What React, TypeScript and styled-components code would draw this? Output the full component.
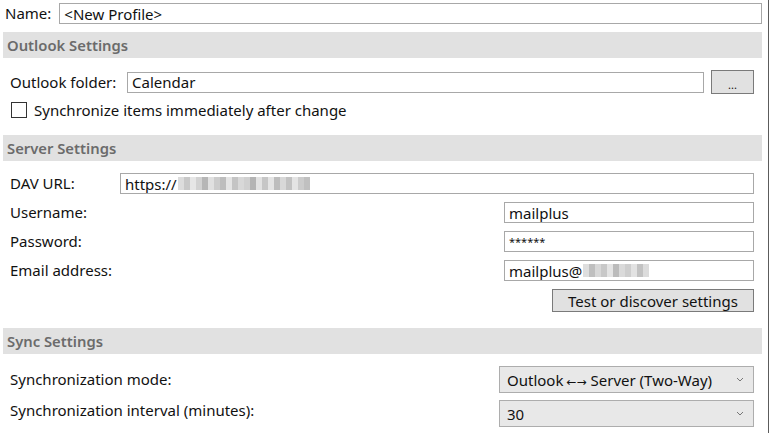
import React from 'react';
import styled, { createGlobalStyle } from 'styled-components';

const GlobalStyle = createGlobalStyle`
  html, body {
    margin: 0;
    padding: 0;
    background: #fff;
  }
  body {
    font-family: "Noto Sans", "Open Sans", sans-serif;
    font-size: 15px;
    color: #111;
  }
`;

const Panel = styled.div`
  width: 769px;
  height: 433px;
  box-sizing: border-box;
  padding: 3px 6px 0 3px;
  border-right: 1px solid #5c5c5c;
  overflow: hidden;
`;

const NameRow = styled.div`
  display: flex;
  align-items: center;
  padding-left: 2px;
  gap: 8px;
`;

const Label = styled.span<{ $width?: number }>`
  flex: none;
  width: ${(p) => (p.$width ? `${p.$width}px` : 'auto')};
  line-height: 21px;
  white-space: nowrap;
`;

const TextBox = styled.div<{ $width?: number; $small?: boolean }>`
  box-sizing: border-box;
  height: 21px;
  flex: ${(p) => (p.$width ? 'none' : '1')};
  width: ${(p) => (p.$width ? `${p.$width}px` : 'auto')};
  border: 1px solid #a8a8a8;
  background: #fff;
  padding: 0 4px;
  display: flex;
  align-items: center;
  font-size: ${(p) => (p.$small ? '11px' : '15px')};
  white-space: nowrap;
  overflow: hidden;
`;

const Band = styled.div<{ $top: number }>`
  margin-top: ${(p) => p.$top}px;
  height: 26px;
  background: #e1e1e1;
  color: #6b6b6b;
  font-weight: 600;
  font-size: 14.8px;
  display: flex;
  align-items: center;
  padding-left: 4px;
`;

const Section = styled.div`
  padding: 12px 8px 0 7px;
  display: flex;
  flex-direction: column;
`;

const Row = styled.div<{ $gap?: number }>`
  display: flex;
  align-items: center;
  justify-content: space-between;
  margin-top: ${(p) => p.$gap ?? 0}px;
`;

const Button = styled.button<{ $width: number }>`
  box-sizing: border-box;
  flex: none;
  width: ${(p) => p.$width}px;
  height: 23px;
  background: #e1e1e1;
  border: 1px solid #7a7a7a;
  font-family: inherit;
  font-size: 15px;
  color: #111;
  padding: 0;
`;

const DotsButton = styled(Button)`
  height: 24px;
  margin-left: 7px;
  font-size: 11px;
  padding-top: 4px;
`;

const CheckRow = styled.label`
  display: flex;
  align-items: center;
  gap: 7px;
  margin-top: 7px;
  padding-left: 1px;
  line-height: 18px;
`;

const CheckBox = styled.span`
  box-sizing: border-box;
  width: 16px;
  height: 16px;
  border: 1px solid #333;
  background: #fff;
`;

const Select = styled.div<{ $gap: number }>`
  box-sizing: border-box;
  flex: none;
  width: 255px;
  height: 27px;
  margin-top: ${(p) => p.$gap}px;
  border: 1px solid #adadad;
  background: #e8e8e8;
  display: flex;
  align-items: center;
  justify-content: space-between;
  padding: 0 9px 0 7px;
`;

const Arrows = styled.span`
  font-family: "DejaVu Sans", sans-serif;
  font-size: 12px;
  margin: 0 4px 0 3px;
`;

const SyncRow = styled.div`
  display: flex;
  align-items: center;
  justify-content: space-between;
`;

const Blur = styled.span`
  display: inline-flex;
  height: 13px;
  margin-left: 1px;
`;

const BlurCell = styled.span<{ $shade: string }>`
  width: 6px;
  height: 13px;
  background: ${(p) => p.$shade};
`;

const ButtonRow = styled.div`
  display: flex;
  justify-content: flex-end;
  margin-top: 8px;
`;

const urlShades = [
  '#dcdcdc', '#c8c8c8', '#e6e6e6', '#d2d2d2', '#b6b6b6', '#e0e0e0', '#cccccc', '#bdbdbd',
  '#e4e4e4', '#c4c4c4', '#d8d8d8', '#d0d0d0', '#b4b4b4', '#e2e2e2', '#c6c6c6', '#e4e4e4',
  '#bdbdbd', '#d8d8d8', '#c2c2c2', '#e4e4e4', '#cccccc', '#c0c0c0',
];

const mailShades = ['#dedede', '#bfbfbf', '#d8d8d8', '#c8c8c8', '#e4e4e4', '#bbbbbb', '#dadada', '#cecece', '#e2e2e2', '#c2c2c2', '#dcdcdc'];

const Chevron = () => (
  <svg width="8" height="5" viewBox="0 0 8 5">
    <path d="M1 1l3 3 3-3" fill="none" stroke="#777" strokeWidth="1" />
  </svg>
);

const Blurred: React.FC<{ shades: string[] }> = ({ shades }) => (
  <Blur>
    {shades.map((s, i) => (
      <BlurCell key={i} $shade={s} />
    ))}
  </Blur>
);

const App: React.FC = () => (
  <Panel>
    <GlobalStyle />
    <NameRow>
      <Label>Name:</Label>
      <TextBox>&lt;New Profile&gt;</TextBox>
    </NameRow>

    <Band $top={8}>Outlook Settings</Band>
    <Section>
      <Row>
        <Label $width={117}>Outlook folder:</Label>
        <TextBox>Calendar</TextBox>
        <DotsButton $width={43}>...</DotsButton>
      </Row>
      <CheckRow>
        <CheckBox />
        Synchronize items immediately after change
      </CheckRow>
    </Section>

    <Band $top={16}>Server Settings</Band>
    <Section>
      <Row>
        <Label $width={110}>DAV URL:</Label>
        <TextBox>
          https://
          <Blurred shades={urlShades} />
        </TextBox>
      </Row>
      <Row $gap={8}>
        <Label>Username:</Label>
        <TextBox $width={250}>mailplus</TextBox>
      </Row>
      <Row $gap={8}>
        <Label>Password:</Label>
        <TextBox $width={250} $small>******</TextBox>
      </Row>
      <Row $gap={8}>
        <Label>Email address:</Label>
        <TextBox $width={250}>
          mailplus@
          <Blurred shades={mailShades} />
        </TextBox>
      </Row>
      <ButtonRow>
        <Button $width={202}>Test or discover settings</Button>
      </ButtonRow>
    </Section>

    <Band $top={16}>Sync Settings</Band>
    <Section>
      <SyncRow>
        <Label>Synchronization mode:</Label>
        <Select $gap={0}>
          <span>
            Outlook<Arrows>←→</Arrows>Server (Two-Way)
          </span>
          <Chevron />
        </Select>
      </SyncRow>
      <SyncRow>
        <Label>Synchronization interval (minutes):</Label>
        <Select $gap={7}>
          <span>30</span>
          <Chevron />
        </Select>
      </SyncRow>
    </Section>
  </Panel>
);

export default App;
